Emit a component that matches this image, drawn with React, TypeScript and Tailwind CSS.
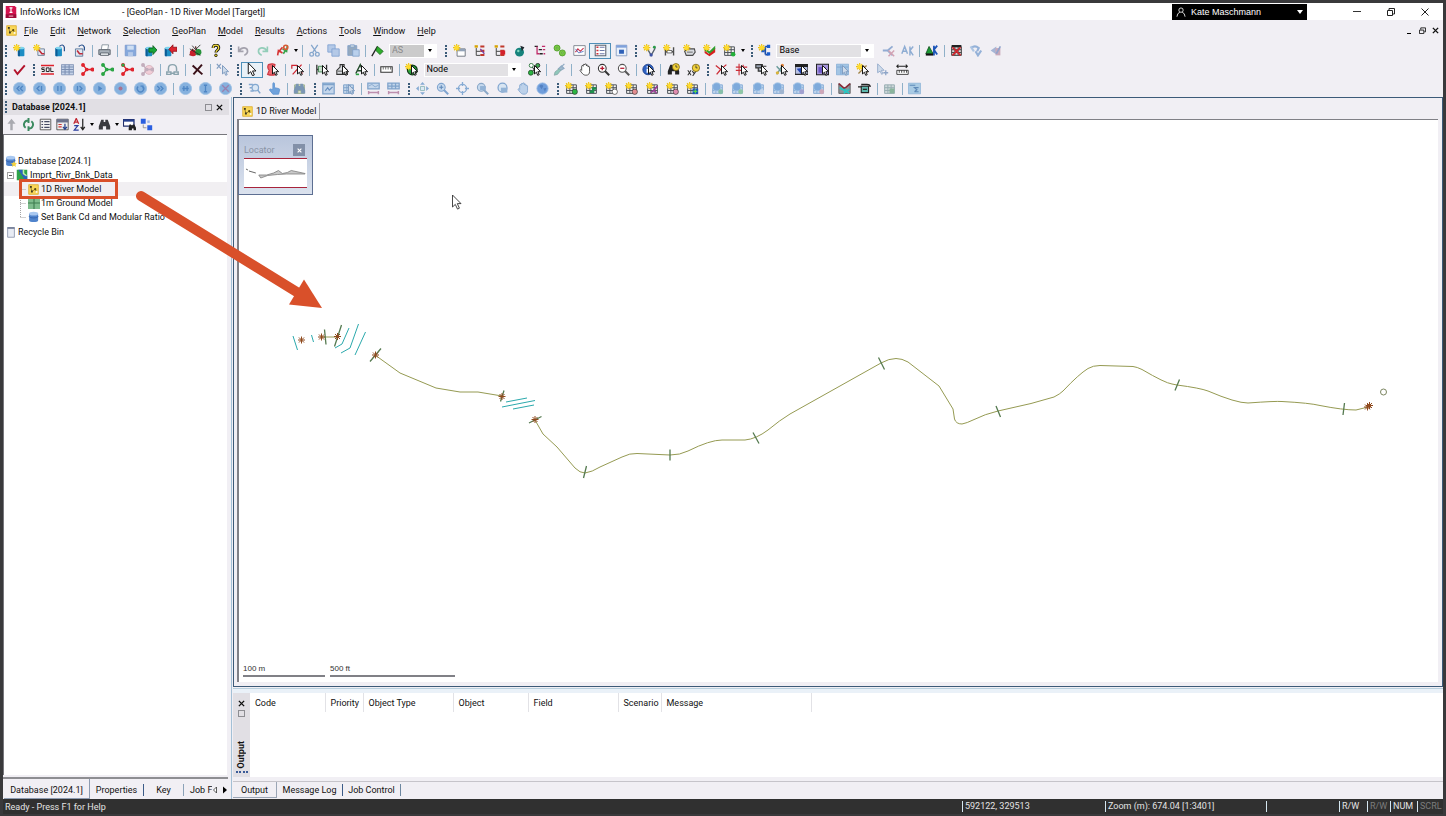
import type { ReactNode } from "react";

/* ---------- shared icon parts, drawn on a 16 x 16 grid ---------- */

const Cursor = ({ dim = false }: { dim?: boolean }) => (
  <path d="M8 3v10.500l2.300-2.100 1.700 3.800 1.800-.8-1.700-3.700h3.400z" fill={dim ? "#cfdbea" : "#fff"} stroke={dim ? "#7f9cc0" : "#111"} strokeWidth="1.200" />
);
const Sun = () => (
  <g>
    <path d="M4.500 0v9M0 4.500h9M1.300 1.300l6.400 6.400M7.700 1.300L1.300 7.700" stroke="#ecc011" strokeWidth="1.400" />
    <circle cx="4.500" cy="4.500" r="2.800" fill="#ffdb2e" />
  </g>
);
const Grid = ({ c = "#4b5057", bg = "#f4f4f4" }: { c?: string; bg?: string }) => (
  <path d="M2 3.500h12v10.500H2zM2 7h12M2 10.500h12M6 3.500V14M10 3.500V14" fill={bg} stroke={c} strokeWidth="1.200" />
);
const Can = ({ x = 6, c = "#1d8ec4" }: { x?: number; c?: string }) => (
  <g>
    <path d={`M${x} 5v9c0 1.500 8 1.500 8 0V5z`} fill={c} />
    <path d={`M${x} 5v9c0 .8 1 1.100 2.500 1.200V5z`} fill="#0d5c96" />
    <ellipse cx={x + 4} cy="5" rx="4" ry="1.500" fill="#7fd4ee" />
  </g>
);
const Ball = ({ children }: { children?: ReactNode }) => (
  <g stroke="#4f86c4" strokeWidth="1.600" fill="none">
    <circle cx="8" cy="8" r="7.500" fill="#86b1de" stroke="#9dc0e4" strokeWidth="1" />
    {children}
  </g>
);
const Lens = ({ c = "#333", fill = "#fff" }: { c?: string; fill?: string }) => (
  <g>
    <path d="M9.500 9.500L15 15" stroke={c} strokeWidth="2.400" />
    <circle cx="6.500" cy="6.500" r="4.800" fill={fill} stroke={c} strokeWidth="1.300" />
  </g>
);
const Nodes = ({ c }: { c: string }) => (
  <g stroke={c} fill={c} strokeWidth="1.600">
    <path d="M3 3l4 5-4 5M7 8h6" fill="none" />
    <circle cx="2.500" cy="2.500" r="1.600" />
    <circle cx="2.500" cy="13.500" r="1.600" />
    <circle cx="7" cy="8" r="1.500" />
    <circle cx="14" cy="8" r="1.700" />
  </g>
);
const Binoculars = ({ c = "#222" }: { c?: string }) => (
  <path d="M4 2h3v3h2V2h3l3 8v4h-5v-4H6v4H1v-4z" fill={c} />
);
const Hand = ({ c, fill }: { c: string; fill: string }) => (
  <path d="M4.500 9V4c0-1.200 1.900-1.200 1.900 0V2.500c0-1.300 2-1.300 2 0V2c0-1.300 2-1.300 2 0v1.500c0-1.200 2-1.200 2 0V5c0-1 1.800-1 1.800 0v5.500c0 3-1.500 4.500-4.200 4.500-3 0-4-1-7.300-5.500-.6-1 .8-1.900 1.800-.5z" fill={fill} stroke={c} />
);
const Tree = ({ c = "#c0392b" }: { c?: string }) => (
  <g>
    <path d="M4 5v9h5M4 9h5" stroke="#444" fill="none" strokeWidth="1.200" />
    <path d="M9 3h5M9 8.500h5M9 13.500h5" stroke={c} strokeWidth="2.600" />
    <path d="M2 3h4" stroke="#d8a400" strokeWidth="3" />
  </g>
);
const NewGrid = ({ c, x }: { c: string; x?: ReactNode }) => (
  <g>
    <Grid />
    <Sun />
    {x ?? <circle cx="12" cy="12" r="3.300" fill={c} stroke="#333" strokeWidth=".8" />}
  </g>
);
const DimMap = ({ c }: { c: string }) => (
  <g>
    <Grid c="#8aaed6" bg="#c5d8ee" />
    <circle cx="7" cy="6" r="5" fill="#7eaadb" stroke="#a9c7e8" />
    <circle cx="12" cy="12" r="3" fill={c} />
  </g>
);
const Sheet = ({ children }: { children?: ReactNode }) => (
  <g>
    <Grid c="#7fa3cb" bg="#c4d6eb" />
    {children}
  </g>
);
const NetworkGlyph = (
  <g fill="none">
    <path d="M1 1h14v14H1z" fill="#f8d658" stroke="#d9a51c" />
    <path d="M4 4l1.500 7M5.500 11l5-3.500 2 4" stroke="#6f5a12" />
    <path d="M2.800 2.800h2.700v2.700H2.800zM4.300 9.500h2.700v2.700H4.300z" fill="#3e3a22" />
    <circle cx="10.500" cy="7.500" r="1.600" fill="#5b4a10" />
    <circle cx="12.500" cy="11.500" r="1.400" fill="#fff" />
  </g>
);

const icons: Record<string, ReactNode> = {
  /* file */
  "New database": <g><Can /><Sun /></g>,
  "New transportable": <g><path d="M6 6h8v8H6z" fill="#e7eef6" stroke="#5a6f8a" /><path d="M7 7l4 5h3" stroke="#c02b3a" strokeWidth="2" fill="none" /><Sun /></g>,
  "Open database": <g><Can x={3} /><path d="M8 3q4-4 6 1v5" stroke="#27508c" fill="none" strokeWidth="1.500" /></g>,
  "Open transportable": <g><path d="M3 6h9v9H3z" fill="#dfe8f2" stroke="#4a6a90" /><path d="M5 8l3 4h4" stroke="#c02b3a" strokeWidth="2" fill="none" /><path d="M7 3q5-4 7 1v4" stroke="#27508c" fill="none" strokeWidth="1.500" /></g>,
  "Print": <g><path d="M5 1h8l-1 6H4z" fill="#fff" stroke="#7b8794" /><path d="M1 7h14v6H1z" fill="#a9b1ba" stroke="#4d5660" /><path d="M3 11h10v3H3z" fill="#eceff2" stroke="#4d5660" /></g>,
  "Save": <g><path d="M1.500 1.500h13v13h-13z" fill="#86a8dc" stroke="#7798cd" /><path d="M4 2h8v5H4z" fill="#cfdff3" /><path d="M5 10h6v5H5z" fill="#b5c9e8" /></g>,
  "Commit": <g><Can x={2} /><path d="M6 5h5V2l5 5.500-5 5.500v-3H6z" fill="#18a538" stroke="#0a5a1c" /></g>,
  "Revert": <g><Can x={1} /><path d="M16 4h-5V1L6 6.500 11 12V9h5z" fill="#dc2430" stroke="#8f1118" /></g>,
  "Flag changes": <g><path d="M1 14l4-8M8 3l2 8" stroke="#4d1a12" strokeWidth="1.500" /><circle cx="5" cy="11" r="4" fill="#c8202b" /><circle cx="11.500" cy="10" r="3.800" fill="#27923a" /><path d="M4 2l4 5 6-6M1 6l13 8" stroke="#222" fill="none" /></g>,
  "Context help": <g><path d="M5 5q0-3.500 3.500-3.500T12 5c0 2.500-3.500 2.500-3.500 5.500" stroke="#111" strokeWidth="3.600" fill="none" /><path d="M5 5q0-3.500 3.500-3.500T12 5c0 2.500-3.500 2.500-3.500 5.500" stroke="#f3dd38" strokeWidth="1.500" fill="none" /><circle cx="8.500" cy="14" r="1.600" fill="#e7ce20" stroke="#111" /></g>,
  /* edit */
  "Undo": <path d="M2 3v6h6M2.500 8.500C6 3 13 4 13 9q0 3-4 5" stroke="#a4a2ad" strokeWidth="2" fill="none" />,
  "Redo": <path d="M14 3v6H8M13.500 8.500C10 3 3 4 3 9q0 3 4 5" stroke="#93cdb9" strokeWidth="2" fill="none" />,
  "Recent changes": <g fill="none" strokeWidth="2"><path d="M2 14l1-6 5 3M3 10l5-6" stroke="#d63434" /><path d="M14 2l-1 7-5-3M13 6l-4 6" stroke="#37a24a" /><circle cx="12" cy="4" r="2.500" stroke="#d65a34" /></g>,
  "Cut": <g fill="none" stroke="#86a7cd" strokeWidth="1.600"><path d="M4 1l6 9M12 1L6 10" /><circle cx="4.500" cy="12.500" r="2.300" /><circle cx="11.500" cy="12.500" r="2.300" /></g>,
  "Copy": <g fill="#b4c9e7" stroke="#7d9fd0"><path d="M1 1h9v9H1z" /><path d="M6 6h9v9H6z" /></g>,
  "Paste": <g stroke="#7f9fc9"><path d="M1 2h11v12H1z" fill="#95a9bd" /><path d="M4 1h5v3H4z" fill="#cbd7e2" /><path d="M7 7h8v8H7z" fill="#b9d0ec" /></g>,
  "Flag": <g><path d="M1 15L8 3" stroke="#222" strokeWidth="1.600" /><path d="M8 3l7 6-4 4-5-5z" fill="#2fae2c" stroke="#17691a" /></g>,
  /* windows */
  "New window": <g><path d="M5 6h10v9H5z" fill="#fff" stroke="#5b6470" /><path d="M5 6h10v3H5z" fill="#92a2b8" /><Sun /></g>,
  "Link view": <g><Tree /><path d="M9 6l5 6" stroke="#7a3fa0" strokeWidth="1.600" /></g>,
  "Tree view": <g><Tree /><path d="M9 8h6v5H9z" fill="#d4202c" /></g>,
  "Paint theme": <g><circle cx="8" cy="10" r="5.500" fill="#16837c" /><path d="M9 2l5 2-3 5z" fill="#1f2a30" /><circle cx="6.500" cy="8.500" r="1.500" fill="#7fd8bd" /></g>,
  "Long section": <g><path d="M2 3h4M7 7h4M8 12h4" stroke="#222" strokeWidth="1.600" /><path d="M5 3v9h3M11 3h4M12 7h3M13 12h2" stroke="#c12c6a" strokeWidth="1.600" fill="none" /></g>,
  "Settings": <g fill="#7ac943" stroke="#4b9a26"><circle cx="5" cy="5" r="3.700" /><circle cx="11.500" cy="11" r="3.700" /><circle cx="5" cy="5" r="1" fill="#fff" /><circle cx="11.500" cy="11" r="1" fill="#fff" /></g>,
  "Graph": <g><path d="M1 2h14v12H1z" fill="#fff" stroke="#6f7683" /><path d="M3 10l3-4 3 3 4-4" stroke="#c8324d" fill="none" strokeWidth="1.400" /><path d="M3 6l4 5 6-2" stroke="#4165bb" fill="none" /></g>,
  "Legend": <g><path d="M1.500 1.500h13v13h-13z" fill="#fff" stroke="#5c6370" strokeWidth="1.300" /><path d="M3 4h2.500M3 8h2.500M3 12h2.500" stroke="#d2303b" strokeWidth="2" /><path d="M7 4h6M7 8h6M7 12h6" stroke="#6d78a8" strokeWidth="1.300" /></g>,
  "Properties window": <g><path d="M1.500 1.500h13v13h-13z" fill="#eaf1fa" stroke="#7d95bd" /><path d="M1.500 1.500h13v3h-13z" fill="#7fa1db" /><path d="M5 7h6v5H5z" fill="#2f61b8" /></g>,
  /* create */
  "Digitise link": <g><path d="M5 5l5 9 5-9" stroke="#55606c" fill="none" strokeWidth="1.600" /><circle cx="14" cy="4" r="1.800" fill="#2a9a4a" /><circle cx="10" cy="13.500" r="2" fill="#3d53a5" /><Sun /></g>,
  "Digitise section": <g><path d="M3 5v9M13 4v10M3 9.500h10" stroke="#4c4c4c" strokeWidth="1.700" fill="none" /><path d="M5 8h6v3H5z" fill="#fff" stroke="#555" /><Sun /></g>,
  "Digitise bank": <g><path d="M2 9l4-3h8l1 4-3 4H4z" fill="#d9dbe0" stroke="#4c4c4c" strokeWidth="1.400" /><path d="M5 10h7" stroke="#555" /><Sun /></g>,
  "Digitise polygon": <g><path d="M2 8l5 4 8-7v5l-7 5-6-4z" fill="#d8201f" /><path d="M2 5l6 4 7-7v4l-7 6-6-4z" fill="#2fa130" /><Sun /></g>,
  "Insert grid object": <g><Grid /><Sun /><circle cx="12.500" cy="12.500" r="2.800" fill="#22b03a" /></g>,
  "New scenario": <g><path d="M5 8h4M9 3v10M9 3h4M9 13h4" stroke="#1d4fa8" strokeWidth="2" fill="none" /><path d="M11 1h4v4h-4zM11 10h4v4h-4zM4 6h4v4H4z" fill="#1a5ccc" /><Sun /></g>,
  "Delete scenario": <g><path d="M1 8h6M7 8l6-5M7 8l6 6" stroke="#92abd2" strokeWidth="2.200" /><path d="M8 8l7 7M15 8l-7 7" stroke="#d3a3b4" strokeWidth="1.800" /></g>,
  "Rename scenario": <g fill="none" stroke="#8fadd3" strokeWidth="1.800"><path d="M1 12L4.500 3 8 12M2.500 9h4M15 3l-4 5 4 6M11 3v11" /></g>,
  "Compare scenarios": <g><path d="M1 12l4-9 5 9z" fill="#1c9a35" stroke="#0b4d18" /><path d="M15 2l-4 5 4 6M11 2v12" stroke="#1b54b8" strokeWidth="2.200" fill="none" /><path d="M1 13h9" stroke="#111" strokeWidth="2.500" /></g>,
  "Exclude scenario": <g><Grid c="#444" bg="#d8d2d2" /><path d="M2 2.500h12" stroke="#222" strokeWidth="2.500" /><path d="M3 4l10 10M13 4L3 14" stroke="#d4222a" strokeWidth="2" /></g>,
  "Validate scenario": <g fill="none" stroke="#94b1d8" strokeWidth="2.600"><path d="M3 5q4-4 9 0l-2 4M8 9l3 5 4-6" /><path d="M2 3l4 6" stroke="#adc5e3" /></g>,
  "Revert scenario": <g><path d="M2 8l7-5v10z" fill="#a5b6d6" /><path d="M8 5h6v9H8z" fill="#c9a9ba" /><path d="M9 12l5-9" stroke="#8fa3cc" strokeWidth="2" /></g>,
  /* validation */
  "Validate network": <path d="M1.500 8l4 5.500L14.500 3" stroke="#b3132b" strokeWidth="2.400" fill="none" />,
  "SQL query": <g><path d="M0 3h16M0 13.500h16" stroke="#e0222c" strokeWidth="2" /><path d="M4.500 6H1v2h3v2.500H1M10 6H6.500v4.500H10zM12 5.500v5h3.500" stroke="#222" strokeWidth="1.200" fill="none" /></g>,
  "Open grid": <g><path d="M0.500 2h15v12.500H.5z" fill="#c3d0e6" stroke="#7c8fb3" /><path d="M.5 5h15M.5 8h15M.5 11h15M5 2v12M10 2v12" stroke="#7c8fb3" strokeWidth="1.300" /></g>,
  "Trace upstream": <Nodes c="#e0242e" />,
  "Trace downstream": <Nodes c="#2ba545" />,
  "Trace between": <g><Nodes c="#e0242e" /><circle cx="2.500" cy="2.500" r="2" fill="#2ba545" /></g>,
  "Trace clear": <g opacity=".6"><circle cx="10" cy="8.500" r="5.500" fill="#f1b8c4" stroke="#c98997" /><Nodes c="#a58398" /></g>,
  "Connectivity": <g fill="none" stroke="#8aa3ad" strokeWidth="1.800"><path d="M3 10V7q0-5 5-5t5 5v3" /><path d="M1 11h5v3H1zM10 11h5v3h-5zM6 12.500h4" /></g>,
  "Delete": <path d="M2 3l12 11M13.500 2L3 14" stroke="#3b1118" strokeWidth="2.400" fill="none" />,
  "Clear selection": <g><path d="M1 1l5 6M6 1L1 7" stroke="#7f9cc0" strokeWidth="1.400" /><Cursor dim /></g>,
  /* selection */
  "Select": <path d="M4 0v13.500l3-2.800 2.300 5 2.200-1-2.200-4.900h4.200z" fill="#fff" stroke="#111" strokeWidth="1.200" />,
  "Polygon select": <g><path d="M3 2q5-2 8 0l-1 5 2 7q-5 2-10 0l2-5q-3-3-1-7z" fill="#ef6a72" stroke="#cf3a44" strokeWidth="1.500" /><Cursor /></g>,
  "Select link": <g><path d="M1 3h6l7 10M2 14L13 2M1 2v5" stroke="#cf2530" strokeWidth="1.500" fill="none" /><Cursor /></g>,
  "Select conduit": <g><path d="M1 2v12M13 2v8M1 8h10" stroke="#333" strokeWidth="1.600" /><path d="M3 4v7h6V4z" fill="#c6dcc9" stroke="#2f7a3d" /><Cursor /></g>,
  "Select catchment": <g><path d="M1 9l4-4V2h5v3l4 4v5H1z" fill="#d9dbdf" stroke="#333" strokeWidth="1.300" /><path d="M2 10h8" stroke="#333" /><Cursor /></g>,
  "Select label": <g><path d="M1 13L6.500 2 11 13M3 9.500h6" stroke="#234a2a" strokeWidth="1.700" fill="none" /><path d="M1 14h4" stroke="#2aa040" strokeWidth="2" /><Cursor /></g>,
  "Measure": <g><path d="M1 4.500h14v7H1z" fill="#fff" stroke="#333" strokeWidth="1.300" /><path d="M4 5v3M7 5v3M10 5v3M13 5v3" stroke="#555" /></g>,
  "New object": <g><circle cx="9" cy="8.500" r="6" fill="#2aa640" stroke="#123a18" strokeWidth="1.500" /><Sun /><Cursor /></g>,
  "Select by type": <g><path d="M4 4l8 8M12 3L4 12" stroke="#333" strokeWidth="1.300" /><circle cx="4" cy="3" r="2.500" fill="#fff" stroke="#1c6e2d" /><circle cx="12" cy="3" r="2.500" fill="#3fae52" stroke="#222" /><circle cx="3.500" cy="12" r="3" fill="#2bb542" stroke="#184f20" /><Cursor /></g>,
  "Pick properties": <g><path d="M14 1l-4 4M10.500 3.500l3 3-5 3-2-2z" stroke="#90abc4" fill="#a5bccf" strokeWidth="1.500" /><path d="M7.500 7l2 2-4 5-4 1 1-4z" fill="#8fc7ba" stroke="#86a9a7" /></g>,
  "Pan": <Hand c="#333" fill="#fff" />,
  "Zoom in": <g><Lens /><path d="M4 6.500h5M6.500 4v5" stroke="#b3122b" strokeWidth="1.500" /></g>,
  "Zoom out": <g><Lens c="#555" /><path d="M4 6.500h5" stroke="#b3122b" strokeWidth="1.500" /></g>,
  "Object info": <g><circle cx="7.500" cy="8" r="6.500" fill="#2f62c4" stroke="#1d3f86" /><path d="M6.500 7v5M6.500 4v1.500" stroke="#fff" strokeWidth="1.800" /><Cursor /></g>,
  "Find object": <g><Binoculars /><circle cx="11" cy="5" r="4.300" fill="#f3d23a" stroke="#7a6412" /><path d="M11 2.500V5h2" stroke="#333" fill="none" /></g>,
  "Goto XY": <g><path d="M1 9l4 6M5 9l-4 6M6.500 10l2 2.500M11 10l-4 6" stroke="#333" strokeWidth="1.300" /><circle cx="11" cy="6" r="4.500" fill="#f3d23a" stroke="#7a6412" /><path d="M11 3v3h2" stroke="#333" fill="none" /></g>,
  /* edit geometry */
  "Edit vertex": <g><path d="M1 3l6 5 7-6M7 8L2 14" stroke="#cc2e38" strokeWidth="1.600" fill="none" /><Cursor /></g>,
  "Split link": <g><path d="M1 5h14M1 9h9M5 1v14M10 2v9" stroke="#cc2e38" strokeWidth="1.400" /><Cursor /></g>,
  "Edit table": <g><path d="M1 2h8v4H1zM9 4h5M4 6v4h5" fill="#97a0b0" stroke="#333" strokeWidth="1.400" /><Cursor /></g>,
  "Edit lines": <g><path d="M2 14L10 2M2 4l8 9" stroke="#6a9a9a" strokeWidth="1.700" /><circle cx="9" cy="3" r="2" fill="#e2843c" /><circle cx="3" cy="12" r="2" fill="#d9b33c" /><Cursor /></g>,
  "Edit region": <g><path d="M0 2h16v12H0z" fill="#b9c2e6" stroke="#222" strokeWidth="1.400" /><path d="M0 2h16v3H0z" fill="#222" /><path d="M2 7l6-1 5 4-6 3z" fill="#2647b4" /><Cursor /></g>,
  "Edit area": <g><path d="M.5 1.500h15v13H.5z" fill="#a796dc" stroke="#222" strokeWidth="1.400" /><path d="M3 5h9v7H3z" fill="#6e58c5" /><Cursor /></g>,
  "Edit zone": <g><path d="M.5 1.500h15v13H.5z" fill="#a3c5e4" stroke="#88afd6" /><path d="M1 5h14M6 2v12" stroke="#7ba5d2" /><Cursor dim /></g>,
  "New vertex": <g><path d="M3 13L13 3M9 3l5 9" stroke="#a08246" strokeWidth="1.600" /><Sun /><Cursor /></g>,
  "Add to selection": <g><path d="M2 1v11l3-2 2 4 1.500-1-2-4h3.500z" fill="#cfdbea" stroke="#8ea5c8" /><path d="M12 9v6M9 12h6" stroke="#8ea5c8" strokeWidth="1.600" /></g>,
  "Measure distance": <g><path d="M1 4h13M3 2L1 4l2 2M12 2l2 2-2 2" stroke="#222" fill="none" strokeWidth="1.300" /><path d="M1 9h14v5H1z" fill="#fff" stroke="#222" /><path d="M4 9v3M7 9v3M10 9v3M13 9v3" stroke="#222" /></g>,
  /* replay */
  "Rewind": <Ball><path d="M8 5L5 8l3 3M12 5L9 8l3 3" /></Ball>,
  "Step back": <Ball><path d="M8 5L5 8l3 3M10.500 5v6" /></Ball>,
  "Pause": <Ball><path d="M6 5v6M10 5v6" /></Ball>,
  "Step forward": <Ball><path d="M8 5l3 3-3 3M5.500 5v6" /></Ball>,
  "Play": <Ball><path d="M6.500 4.500v7l5-3.500z" fill="#4f86c4" stroke="none" /></Ball>,
  "Record": <Ball><circle cx="8" cy="8" r="2.500" fill="#a9728e" stroke="none" /></Ball>,
  "Loop": <Ball><path d="M5 5.500a4 4 0 1 0 6 0M11 8V5h-3" /></Ball>,
  "Fast forward": <Ball><path d="M4 5l3 3-3 3M8 5l3 3-3 3" /></Ball>,
  "Replay nodes": <Ball><path d="M4 8h8M6 5v6M10 5v6" /></Ball>,
  "Replay info": <Ball><path d="M8 3.500v9M6 4h4M6 12h4" /></Ball>,
  "Replay off": <Ball><path d="M4 4l8 8M12 4l-8 8" stroke="#9a7fae" /></Ball>,
  "Find replay": <g><path d="M1 3h5M2 7h4M3 11h4" stroke="#83a8d0" strokeWidth="2" /><circle cx="9" cy="7" r="4" fill="#dbe7f4" stroke="#83a8d0" strokeWidth="1.500" /><path d="M12 10l3 4" stroke="#83a8d0" strokeWidth="2" /></g>,
  "Point": <path d="M6 9V2c0-1.500 2-1.500 2 0v5l5 1c1.500.3 1.500 1.500 1 3l-1 4H6L2 10c-.5-1 1-2 2-1z" fill="#6fa2dc" stroke="#5d93d0" />,
  "Find in grid": <g><Grid c="#9bb08a" bg="#d9e2cf" /><Binoculars c="#7b96b4" /></g>,
  "Window graph": <g><path d="M1 1.500h14v13H1z" fill="#c4d6eb" stroke="#7fa3cb" strokeWidth="1.500" /><path d="M1 3h14" stroke="#7fa3cb" strokeWidth="2" /><path d="M4 11l3-4 2 3 4-4" stroke="#6890c0" strokeWidth="1.500" fill="none" /></g>,
  "Window select": <Sheet><Cursor dim /></Sheet>,
  "Section results": <g><path d="M1 1.500h14v7H1z" fill="#c4d6eb" stroke="#7fa3cb" strokeWidth="1.500" /><path d="M2 5l4-2 4 3 4-2" stroke="#7fa3cb" fill="none" /><path d="M2 13h12M2 11v4M14 11v4" stroke="#bd8fae" strokeWidth="1.800" /></g>,
  "Grid results": <g><path d="M1 1.500h14v7H1zM1 5h14M6 1.500v7M10.500 1.500v7" fill="#c4d6eb" stroke="#7fa3cb" strokeWidth="1.500" /><path d="M2 13h12M2 11v4M14 11v4" stroke="#bd8fae" strokeWidth="1.800" /></g>,
  "Zoom to fit": <g fill="#86abd4"><path d="M8 0l3 3.500H5zM8 16l3-3.500H5zM0 8l3.500-3v6zM16 8l-3.500-3v6z" /><path d="M5.500 5.500h5v5h-5z" fill="#dce8f3" stroke="#86b5b5" /></g>,
  "Zoom 3D in": <g><Lens c="#7fa4cf" fill="#c6d9ee" /><path d="M4 6.500h5M6.500 4v5" stroke="#5e87b8" strokeWidth="1.300" /></g>,
  "Centre view": <g fill="none" stroke="#86abd4" strokeWidth="1.600"><circle cx="8" cy="8" r="5" /><path d="M8 0v5M8 11v5M0 8h5M11 8h5" /></g>,
  "Zoom window": <g><Lens c="#8aa8c8" fill="#c6d9ee" /><path d="M5 5h7v5H5z" fill="#93b3d6" /></g>,
  "Zoom selection": <g fill="#93b3d6" stroke="#7fa4cf"><circle cx="8" cy="7" r="5.500" fill="#d8e5f2" strokeWidth="1.500" /><path d="M6 7h8v6H6z" stroke="none" /></g>,
  "Pan 3D": <Hand c="#7fa4cf" fill="#bcd1ea" />,
  "Globe": <g><circle cx="8" cy="8" r="7" fill="#6f9ddb" stroke="#a9c5e8" /><path d="M4 5q3-3 5 0l-2 4zM9 8l4-1-2 5z" fill="#5381c2" /></g>,
  "New node grid": <NewGrid c="#2bb542" />,
  "New link grid": <NewGrid c="" x={<path d="M6 12h4V8h4" stroke="#1f8f4d" strokeWidth="3" fill="none" />} />,
  "New catchment grid": <NewGrid c="#fff" />,
  "New pollutant grid": <NewGrid c="#e38d90" />,
  "New line grid": <NewGrid c="" x={<path d="M6 13l4-3 4-5M10 10l3 4" stroke="#9a3a96" strokeWidth="2" fill="none" />} />,
  "New point grid": <NewGrid c="#e08cb0" />,
  "New custom grid": <NewGrid c="" x={<g><path d="M8 8h7v7H8z" fill="#1c53ba" /><path d="M11.500 9v5M9 11.500h5" stroke="#58d84c" strokeWidth="1.500" /></g>} />,
  "Node map": <DimMap c="#86bfa8" />,
  "Link map": <DimMap c="#8fc7a5" />,
  "Area map": <DimMap c="#c3d5ea" />,
  "Flood map": <DimMap c="#9fb4cf" />,
  "Line map": <DimMap c="#a2a0cf" />,
  "Point map": <DimMap c="#cfa7b8" />,
  "Flow section": <g><path d="M1 2v12h14V2l-5 5H6z" fill="#8d959c" stroke="#555" /><path d="M1 2l7 6 7-6" stroke="#8a2c38" strokeWidth="2" fill="none" /><path d="M2 7l12 7M7 14l7-5M9 8v5" stroke="#24c9c4" strokeWidth="2" /></g>,
  "Pump": <g><path d="M4 5h9v8H4z" fill="#5db8ae" stroke="#222" strokeWidth="1.400" /><path d="M0 6h4M4 3h7q4 0 4 3" stroke="#222" strokeWidth="1.600" fill="none" /><path d="M6 9h5" stroke="#222" strokeWidth="1.500" /></g>,
  "Section table": <g><Grid c="#97adb2" bg="#cfd9da" /><path d="M8 8h6v6H8z" fill="#8ab49c" /></g>,
  "Summary": <g><path d="M.5 1.500h15v13H.5z" fill="#a9cbe4" stroke="#8fb5d8" /><path d="M2 4h7M8 12l3-2.500L8 7h5M8 12h5" stroke="#5e8ab8" strokeWidth="1.400" fill="none" /></g>,
  /* database panel */
  "Up one level": <path d="M8 1l5 6H9.500v8h-3V7H3z" fill="#a9aab0" />,
  "Refresh": <path d="M4.500 12A5 5 0 0 1 8 3M11.500 4A5 5 0 0 1 8 13M8 0v6M8 10v6" stroke="#3b8a60" strokeWidth="2.400" fill="none" />,
  "List view": <g><path d="M1.500 1.500h13v13h-13z" fill="#f2f2f2" stroke="#444" /><path d="M3 4.500h2M3 8h2M3 11.500h2M6.500 4.500H13M6.500 8H13M6.500 11.500H13" stroke="#444a63" strokeWidth="1.500" /></g>,
  "Sort columns": <g><path d="M1 1.500h14v13H1z" fill="#eee" stroke="#444" /><path d="M1 1.500h14v4H1z" fill="#6c738d" /><path d="M3 8h4M3 11h4" stroke="#c33" strokeWidth="1.500" /><path d="M11 7v6M8.500 11l2.500 3 2.500-3" stroke="#233f8c" strokeWidth="1.500" fill="none" /></g>,
  "Sort": <g fill="none" strokeWidth="1.500"><path d="M1 7l3-6.500L7 7M2 5h4" stroke="#c0232f" /><path d="M1.500 9.500H6L1.500 15H7" stroke="#2a3e9e" /><path d="M12 1v13M9.500 11l2.500 3.500 2.500-3.500" stroke="#222" /></g>,
  "Find": <Binoculars c="#3a3a3f" />,
  "Find window": <g><path d="M.5 2h13v8H.5z" fill="#fff" stroke="#222f6b" strokeWidth="1.600" /><path d="M.5 2h13v2.500H.5z" fill="#27418f" /><path d="M8 8h2v1h2V8h2l2 4v3h-3v-2h-2v2H7v-3z" fill="#222" /></g>,
  "Group": <g fill="#2a5fe0"><path d="M1 1h6v6H1zM9 9h6v6H9z" /><path d="M4 8v4h4" stroke="#888" fill="none" /><path d="M9 3h3v3H9z" fill="#9ab4ea" /></g>,
};

const Icon = ({ name }: { name: string }) => (
  <svg viewBox="0 0 16 16" className="size-[13px] shrink-0" fill="none" aria-hidden="true">{icons[name]}</svg>
);

/* ---------- toolbars ---------- */

type Combo = { label: string; value: string; width: string; field: string; muted?: boolean };
type Item = string | Combo;
type Group = { width: string; items: Item[] };

const rows: Group[][] = [
  [
    { width: "w-[225px]", items: ["New database", "New transportable", "Open database", "Open transportable", "|", "Print", "|", "Save", "Commit", "Revert", "|", "Flag changes", "Context help"] },
    { width: "w-[215px]", items: ["Undo", "Redo", "Recent changes", "v", "|", "Cut", "Copy", "Paste", "|", "Flag", { label: "Flag value", value: "AS", width: "w-12", field: "bg-[#cbcbcb]", muted: true }] },
    { width: "w-[190px]", items: ["New window", "Link view", "Tree view", "Paint theme", "Long section", "Settings", "Graph", "*Legend", "Properties window"] },
    { width: "w-[116px]", items: ["Digitise link", "Digitise section", "Digitise bank", "Digitise polygon", "Insert grid object", "v"] },
    { width: "w-[258px]", items: ["New scenario", { label: "Scenario", value: "Base", width: "w-[98px]", field: "bg-[#e2e1e4]" }, "Delete scenario", "Rename scenario", "|", "Compare scenarios", "|", "Exclude scenario", "Validate scenario", "Revert scenario"] },
  ],
  [
    { width: "w-[28px]", items: ["Validate network"] },
    { width: "w-[204px]", items: ["SQL query", "Open grid", "Trace upstream", "Trace downstream", "Trace between", "Trace clear", "|", "Connectivity", "|", "Delete", "|", "Clear selection"] },
    { width: "w-[470px]", items: ["*Select", "Polygon select", "|", "Select link", "|", "Select conduit", "Select catchment", "Select label", "|", "Measure", "|", "New object", { label: "Object type", value: "Node", width: "w-[97px]", field: "bg-[#e2e1e4]" }, "Select by type", "|", "Pick properties", "|", "Pan", "Zoom in", "Zoom out", "|", "Object info", "|", "Find object", "Goto XY"] },
    { width: "w-[210px]", items: ["Edit vertex", "Split link", "Edit table", "Edit lines", "Edit region", "Edit area", "Edit zone", "New vertex", "Add to selection", "Measure distance"] },
  ],
  [
    { width: "w-[235px]", items: ["Rewind", "Step back", "Pause", "Step forward", "Play", "Record", "Loop", "Fast forward", "|", "Replay nodes", "Replay info", "Replay off"] },
    { width: "w-[74px]", items: ["Find replay", "Point", "|", "Find in grid"] },
    { width: "w-[94px]", items: ["Window graph", "Window select", "|", "Section results", "Grid results"] },
    { width: "w-[149px]", items: ["Zoom to fit", "Zoom 3D in", "Centre view", "Zoom window", "Zoom selection", "Pan 3D", "Globe"] },
    { width: "w-[372px]", items: ["New node grid", "New link grid", "New catchment grid", "New pollutant grid", "New line grid", "New point grid", "New custom grid", "|", "Node map", "Link map", "Area map", "Flood map", "Line map", "Point map", "|", "Flow section", "Pump", "|", "Section table", "|", "Summary"] },
  ],
];

const DropArrow = () => <span className="border-x-2 border-t-[3px] border-x-transparent border-t-black" />;

function ToolItem({ item }: { item: Item }) {
  if (typeof item !== "string") {
    return (
      <label className={`${item.width} ml-0.5 mr-1 flex h-3.5 shrink-0 items-center bg-white p-px`}>
        <select aria-label={item.label} className={`${item.field} ${item.muted ? "text-[#8a8a8a]" : "text-black"} h-full min-w-0 flex-1 appearance-none pl-0.5 leading-none outline-none`}>
          <option>{item.value}</option>
        </select>
        <span className="flex w-3 justify-center"><DropArrow /></span>
      </label>
    );
  }
  if (item === "|") return <span className="flex w-[5px] shrink-0 justify-center"><span className="h-3 w-px bg-[#8fb0c8]" /></span>;
  if (item === "v") return <button aria-label="More options" className="flex h-4 w-2 shrink-0 items-center justify-center"><DropArrow /></button>;
  const active = item.startsWith("*");
  const name = active ? item.slice(1) : item;
  return (
    <button aria-label={name} className={`flex h-4 flex-1 items-center justify-center ${active ? "border border-[#4f8fb8] bg-[#e9f1f7]" : ""}`}>
      <Icon name={name} />
    </button>
  );
}

const Grip = () => <span className="h-3 w-1 shrink-0 border-l-2 border-dotted border-[#3b5b78]" />;

function Toolbars() {
  return (
    <div className="bg-[#f1eff4]">
      {rows.map((groups, r) => (
        <div key={r} className="flex h-[19px] items-center pl-0.5">
          {groups.map((g, i) => (
            <div key={i} role="toolbar" className={`${g.width} flex shrink-0 items-center pr-1`}>
              <Grip />
              {g.items.map((it, k) => <ToolItem key={k} item={it} />)}
            </div>
          ))}
        </div>
      ))}
    </div>
  );
}

/* ---------- title and menu ---------- */

function TitleBar() {
  return (
    <header className="flex h-[17px] items-center bg-white pl-0.5">
      <svg viewBox="0 0 16 16" className="size-3" fill="none" aria-hidden="true">
        <path d="M1 0h12l2 2v14H1z" fill="#d4144f" />
        <path d="M1 11h14v5H1z" fill="#9d0c38" />
        <path d="M6 2.500h4M8 2.500v6M6 8.500h4" stroke="#fff" strokeWidth="1.500" />
        <path d="M5 13.500h6" stroke="#f0a7bd" strokeWidth="1.500" />
      </svg>
      <h1 className="flex flex-1 pl-[3px]">
        <span className="w-[102px]">InfoWorks ICM</span>
        <span>- [GeoPlan - 1D River Model [Target]]</span>
      </h1>
      <button className="mr-11 flex h-4 w-[135px] items-center bg-black px-1 text-white">
        <svg viewBox="0 0 16 16" className="size-2.5" fill="none" stroke="#fff" strokeWidth="1.300" aria-hidden="true">
          <circle cx="8" cy="5" r="3.500" />
          <path d="M1.500 15.500q.5-6 4.500-7M14.500 15.500q-.5-6-4.500-7" />
        </svg>
        <span className="flex-1 pl-[5px] text-left font-['Liberation_Sans',sans-serif]">Kate Maschmann</span>
        <span className="border-x-[3px] border-t-4 border-x-transparent border-t-white" />
      </button>
      <div className="flex items-center gap-[22px] pr-3">
        <button aria-label="Minimise" className="flex size-3 items-center justify-center"><span className="h-px w-2 bg-[#333]" /></button>
        <button aria-label="Restore" className="flex size-3 items-center justify-center">
          <svg viewBox="0 0 8 8" className="size-2" fill="none" stroke="#222"><path d="M.5 2.500h5v5h-5zM2 2.500v-2h5.500V6H5.500" /></svg>
        </button>
        <button aria-label="Close" className="flex size-3 items-center justify-center">
          <svg viewBox="0 0 8 8" className="size-2" fill="none" stroke="#222"><path d="M.5 .5l7 7M7.500 .5l-7 7" /></svg>
        </button>
      </div>
    </header>
  );
}

const CloseX = () => <svg viewBox="0 0 8 8" className="size-[7px]" stroke="#111" strokeWidth="1.600" aria-hidden="true"><path d="M1 1l6 6M7 1L1 7" /></svg>;

function MenuBar() {
  const menus = ["File", "Edit", "Network", "Selection", "GeoPlan", "Model", "Results", "Actions", "Tools", "Window", "Help"];
  return (
    <nav className="flex h-[21px] items-center bg-[#f1eff4] pl-[3px]">
      <svg viewBox="0 0 16 16" className="mr-0.5 size-[11px]" aria-hidden="true">{NetworkGlyph}</svg>
      <div className="flex flex-1 gap-3 pl-[5px]">
        {menus.map((m) => (
          <button key={m}><span className="underline underline-offset-1">{m[0]}</span>{m.slice(1)}</button>
        ))}
      </div>
      <div className="flex items-center gap-1.5 pr-1">
        <button aria-label="Minimise document" className="flex h-2 w-2 items-end justify-center"><span className="mb-px h-px w-1 bg-black" /></button>
        <button aria-label="Restore document"><svg viewBox="0 0 8 8" className="size-[7px]" fill="none" stroke="#111"><path d="M.5 3.500h5v4h-5zM2 3V1h5.500v4.500H6" /></svg></button>
        <button aria-label="Close document"><CloseX /></button>
      </div>
    </nav>
  );
}

/* ---------- database panel ---------- */

const DbCan = ({ star = false }: { star?: boolean }) => (
  <svg viewBox="0 0 16 16" className="size-3 shrink-0" aria-hidden="true">
    <path d="M1.500 3.500v9c0 3 12 3 12 0v-9z" fill="#4f83cc" />
    <ellipse cx="7.500" cy="3.500" rx="6" ry="2.500" fill="#a9c8f0" />
    <path d="M1.500 7c0 3 12 3 12 0" stroke="#2d5aa6" fill="none" />
    {star && <path d="M12 8l1.200 2.600 2.800.3-2 2 .6 3-2.600-1.500L9.400 16l.6-3-2-2 2.800-.4z" fill="#f6d33c" />}
  </svg>
);

const Branch = ({ last = false }: { last?: boolean }) => (
  <svg viewBox="0 0 7 14" className="h-3.5 w-[7px] shrink-0" stroke="#a5a5a5" strokeDasharray="1 1" aria-hidden="true">
    <path d={last ? "M.5 0v7.500M.5 7.500h6" : "M.5 0v14M.5 7.500h6"} fill="none" />
  </svg>
);

function DatabasePanel() {
  return (
    <aside className="flex w-[226px] shrink-0 flex-col">
      <div className="mt-0.5 flex h-4 items-center bg-[#e1dfe4] pl-0.5">
        <Grip />
        <h2 className="flex-1 pl-[3px] font-bold">Database [2024.1]</h2>
        <button aria-label="Float panel" className="mr-1 size-[7px] border border-[#8d8d92]" />
        <button aria-label="Close panel" className="mr-1.5"><CloseX /></button>
      </div>
      <div role="toolbar" className="flex h-[19px] items-center gap-1 pl-0.5">
        {["Up one level", "Refresh", "List view", "Sort columns", "Sort", "v", "Find", "v", "Find window", "Group"].map((n, i) =>
          n === "v" ? (
            <button key={i} aria-label="More options" className="flex w-1 justify-center"><DropArrow /></button>
          ) : (
            <button key={i} aria-label={n}><Icon name={n} /></button>
          ),
        )}
      </div>
      <div className="mr-0.5 flex-1 border-l border-t border-[#77777c] bg-white pt-[19px]">
        <ul className="leading-[14px]">
          <li>
            <div className="flex h-3.5 items-center gap-px pl-px"><DbCan star />Database [2024.1]</div>
            <ul>
              <li>
                <div className="flex h-3.5 items-center overflow-hidden pl-[3px]">
                  <button aria-label="Collapse" className="flex size-[7px] items-center justify-center border border-[#a0a0a0] bg-white"><span className="h-px w-[3px] bg-[#555]" /></button>
                  <svg viewBox="0 0 16 16" className="ml-0.5 mr-0.5 size-3" aria-hidden="true">
                    <path d="M1 1h14v14H1z" fill="#2fa34a" />
                    <path d="M3 1l4 6 5 8h3V9L9 5V1z" fill="#2c62bd" />
                    <path d="M10 1v5l4 3" stroke="#bff0a9" fill="none" strokeWidth="2" />
                  </svg>
                  Imprt_Rivr_Bnk_Data
                </div>
                <ul>
                  <li className="relative flex h-3.5 items-center gap-px bg-[#f1eff2] pl-4">
                    <Branch />
                    <svg viewBox="0 0 16 16" className="mr-px size-[11px]" aria-hidden="true">{NetworkGlyph}</svg>
                    1D River Model
                    <span className="absolute -top-[3px] left-[15px] h-5 w-[99px] border-[3px] border-[#d9502a]" />
                  </li>
                  <li className="flex h-3.5 items-center gap-px pl-4">
                    <Branch />
                    <svg viewBox="0 0 16 16" className="size-3" aria-hidden="true">
                      <path d="M0 0h16v16H0z" fill="#7fbd8d" />
                      <path d="M8 0v16M0 8h16" stroke="#3f7c50" strokeWidth="1.500" />
                    </svg>
                    1m Ground Model
                  </li>
                  <li className="flex h-3.5 items-center gap-px pl-4"><Branch last /><DbCan />Set Bank Cd and Modular Ratio</li>
                </ul>
              </li>
            </ul>
          </li>
          <li className="flex h-4 items-center gap-px pl-px">
            <svg viewBox="0 0 16 16" className="size-3" aria-hidden="true">
              <path d="M3.500 3h9v12h-9z" fill="#e8ecf4" stroke="#7c87a0" />
              <path d="M3 2.500h10" stroke="#6a7590" strokeWidth="2" />
            </svg>
            Recycle Bin
          </li>
        </ul>
      </div>
      <div className="mr-px mt-0.5 flex h-[22px] items-start whitespace-nowrap border-t-2 border-[#8e8e92] pt-[3px]">
        <button className="-mt-[3px] ml-px h-5 w-[86px] shrink-0 border-b border-r border-[#8d9bb0] pt-0.5">Database [2024.1]</button>
        <button className="h-4 w-[53px] shrink-0">Properties</button>
        <span className="mt-0.5 h-3 w-px bg-[#3b5b88]" />
        <button className="h-4 w-[39px] shrink-0">Key</button>
        <span className="mt-0.5 h-3 w-px bg-[#8ba2b8]" />
        <button className="h-4 flex-1 overflow-hidden pl-1.5 text-left">Job F</button>
        <svg viewBox="0 0 16 8" className="mt-1 h-2 w-4 shrink-0" aria-hidden="true">
          <path d="M4.500 1v6l-3-3z" fill="#fff" stroke="#333" strokeWidth=".8" />
          <path d="M11 .5v7L15 4z" fill="#000" />
        </svg>
      </div>
    </aside>
  );
}

/* ---------- map ---------- */

const Star = ({ x, y }: { x: number; y: number }) => (
  <path d={`M${x - 3.5} ${y}h7M${x} ${y - 3.5}v7M${x - 2.5} ${y - 2.5}l5 5M${x + 2.5} ${y - 2.5}l-5 5`} stroke="#8f4a1e" strokeWidth="1" />
);

function GeoPlan() {
  const stars: [number, number][] = [[301.5, 340], [321.5, 337], [337.5, 336.5], [375.5, 355], [502, 396.5], [535, 419.5], [1367.5, 407], [1369.5, 405.5]];
  return (
    <svg viewBox="239 120 1199 562" preserveAspectRatio="xMinYMin meet" className="absolute inset-0 size-full" fill="none" role="img" aria-label="River network plan">
      <g stroke="#959a52" strokeWidth="1">
        <path d="M321 337H338" />
        <path d="M375 355L400 373 436 388 460 392 478 392 502 396" />
        <path d="M535 420L543 434 557 447 575 468Q580 473 585 473 592 472 600 467L622 457Q630 453 637 453.500L670 455Q680 455 688 451 710 440 722 440L745 440Q756 439 768 430 780 420 790 414L881 363Q889 358.500 896 358.500 902 358.500 908 362L939 386 953 409 954.500 419Q956 424 962 424 967 423 973 420 985 414 998 411L1031 403.500 1054 397Q1060 394 1063 391 1079 374 1088 368.500 1093 365.500 1100 365.500L1133 366.500Q1137 367 1142 369.500 1165 383 1172 384L1177 385Q1200 388 1208 391 1236 403 1248 403 1275 401 1282 401.500 1310 403 1320 405.500 1343 410 1356 410L1368 407" />
      </g>
      <g stroke="#2ba9ac" strokeWidth="1">
        <path d="M293 336l4.500 14M311.500 335l2 7M349 328l-7 16-7 4M358.500 324l-8.500 24-9 5M365.500 332l-10.500 23" />
        <path d="M506 402l21-4M502 407l33-6.500M513 409l21-4" />
      </g>
      <g stroke="#557a50" strokeWidth="1.300">
        <path d="M324.500 329.500l1.500 15M341.500 325l-7 21.500M381 348.500l-11 13M504 390.500l-3.500 11M541.500 416.500l-12.500 6.500" />
        <path d="M586.500 466l-3 12M670 449.500v11M753 432.500l6 11M878.500 357.500l6 12M996 406l4.500 11M1179.500 379.500l-4.500 11M1344.500 403l-1.500 12" />
      </g>
      {stars.map(([x, y], i) => <Star key={i} x={x} y={y} />)}
      <circle cx="1383.500" cy="392" r="3" stroke="#7b8560" />
      <path d="M452.500 195v12l2.800-2.600 2.200 4.700 1.900-.9-2.100-4.600h3.700z" fill="#fff" stroke="#333" strokeWidth=".9" />
    </svg>
  );
}

function Locator() {
  return (
    <section className="absolute -left-px top-[15px] flex h-[60px] w-[75px] flex-col border border-[#5d6f92] bg-linear-to-b from-[#b9c5dc] to-[#dbe2ee] px-[5px] pb-1.5">
      <div className="flex h-[22px] shrink-0 items-center justify-between pt-1.5 text-[#8993a6]">
        <h3>Locator</h3>
        <button aria-label="Close locator" className="mr-0.5 flex size-3 items-center justify-center bg-[#8290a8]">
          <svg viewBox="0 0 8 8" className="size-[5px]" stroke="#fff" strokeWidth="1.800"><path d="M1 1l6 6M7 1L1 7" /></svg>
        </button>
      </div>
      <svg viewBox="0 0 64 28" className="min-h-0 w-full flex-1 border-y border-[#a8243c] bg-white" fill="none" preserveAspectRatio="none">
        <path d="M2 10l2 1M5 12l7 2" stroke="#666" />
        <path d="M15 16h8l7-2 5-2.500 4 3 5-1 4-2 14 3v.5H43l-9 .5-10 1-7 2.500z" fill="#c9c9c9" stroke="#7d7d7d" strokeWidth=".8" />
      </svg>
    </section>
  );
}

function MapWindow() {
  return (
    <section className="flex min-h-0 flex-1 flex-col border border-[#3c5a78] bg-[#f1eff4] pb-1 pl-[3px] pr-1">
      <div className="flex h-[21px] items-end pl-[5px]">
        <button className="flex h-4 items-center gap-[3px] border-r border-[#a7a5ad] pr-[3px]">
          <svg viewBox="0 0 16 16" className="size-[11px]" aria-hidden="true">{NetworkGlyph}</svg>
          1D River Model
        </button>
      </div>
      <div className="relative flex-1 border-l-2 border-t border-[#808086] bg-white">
        <GeoPlan />
        <Locator />
        <div className="absolute bottom-[5px] left-1 flex gap-[5px] font-['Liberation_Sans',sans-serif] text-[8px] text-[#333]">
          <div className="w-[82px] border-b-2 border-[#808086] leading-[12px]">100 m</div>
          <div className="w-[125px] border-b-2 border-[#808086] leading-[12px]">500 ft</div>
        </div>
      </div>
    </section>
  );
}

/* ---------- output ---------- */

function OutputPanel() {
  const cols: [string, string][] = [
    ["Code", "w-[75px]"], ["Priority", "w-[38px]"], ["Object Type", "w-[90px]"], ["Object", "w-[75px]"],
    ["Field", "w-[90px]"], ["Scenario", "w-[43px]"], ["Message", "w-[150px]"],
  ];
  return (
    <section className="flex h-[84px] shrink-0">
      <div className="flex w-[17px] flex-col items-center gap-[3px] bg-[#e1dfe4] pt-1.5">
        <button aria-label="Close output" className="h-2"><CloseX /></button>
        <button aria-label="Float output" className="size-[7px] border border-[#8d8d92]" />
        <h2 className="mt-auto rotate-180 font-bold leading-[11px] [writing-mode:vertical-rl]">Output</h2>
        <span className="mb-1 w-3 border-t-2 border-dotted border-[#3b5b98]" />
      </div>
      <div className="flex-1 bg-white">
        <table className="table-fixed border-collapse">
          <thead>
            <tr className="h-[19px]">
              {cols.map(([c, w]) => <th key={c} scope="col" className={`${w} whitespace-nowrap border-r border-[#e2e2e6] p-0 pl-[5px] text-left font-normal`}>{c}</th>)}
            </tr>
          </thead>
        </table>
      </div>
    </section>
  );
}

function OutputTabs() {
  return (
    <div className="mt-1 flex h-[18px] shrink-0 items-start border-t border-[#c6c4ca]">
      <button className="h-4 w-[44px] border-b border-r border-[#9aa5b5]">Output</button>
      <button className="h-4 w-[65px]">Message Log</button>
      <span className="mt-0.5 h-3 w-px bg-[#3b5b88]" />
      <button className="h-4 w-[57px]">Job Control</button>
      <span className="mt-0.5 h-3 w-px bg-[#6d87a0]" />
    </div>
  );
}

function StatusBar() {
  const cell = "border-l border-[#d5e6f0] pl-0.5 leading-[11px] whitespace-nowrap";
  return (
    <footer className="flex h-[15px] shrink-0 items-center bg-[#303030] pl-0.5 text-[#e4e4e4]">
      <span className="flex-1">Ready - Press F1 for Help</span>
      <span className={`${cell} w-[143px]`}>592122, 329513</span>
      <span className={`${cell} w-[161px]`}>Zoom (m): 674.04 [1:3401]</span>
      <span className={`${cell} h-[11px] w-[73px]`} />
      <span className={`${cell} w-7`}>R/W</span>
      <span className={`${cell} w-[23px] text-[#7c7c7c]`}>R/W</span>
      <span className={`${cell} w-[27px]`}>NUM</span>
      <span className={`${cell} w-[26px] text-[#7c7c7c]`}>SCRL</span>
    </footer>
  );
}

export default function App() {
  return (
    <div className="relative flex h-screen min-h-[480px] flex-col overflow-hidden border-[3px] border-b-2 border-[#39393b] bg-[#f1eff4] font-[Roboto,sans-serif] text-[9px] leading-[14px] text-[#111]">
      <TitleBar />
      <MenuBar />
      <Toolbars />
      <div className="-mt-px flex min-h-0 flex-1">
        <DatabasePanel />
        <div className="ml-0.5 flex min-w-0 flex-1 flex-col border-l border-[#a3c0d6] pl-px">
          <MapWindow />
          <div className="mt-px h-[5px] shrink-0 border-t border-[#b9d0de] bg-[#eaf1f8]" />
          <OutputPanel />
          <OutputTabs />
        </div>
      </div>
      <StatusBar />
      <svg viewBox="130 185 200 130" className="pointer-events-none absolute left-[127px] top-[182px] h-[130px] w-[200px]" aria-hidden="true">
        <path d="M141 196L300 294" stroke="#d9502a" strokeWidth="10" strokeLinecap="round" />
        <path d="M322 308l-33-3.500 15-25z" fill="#d9502a" />
      </svg>
    </div>
  );
}
